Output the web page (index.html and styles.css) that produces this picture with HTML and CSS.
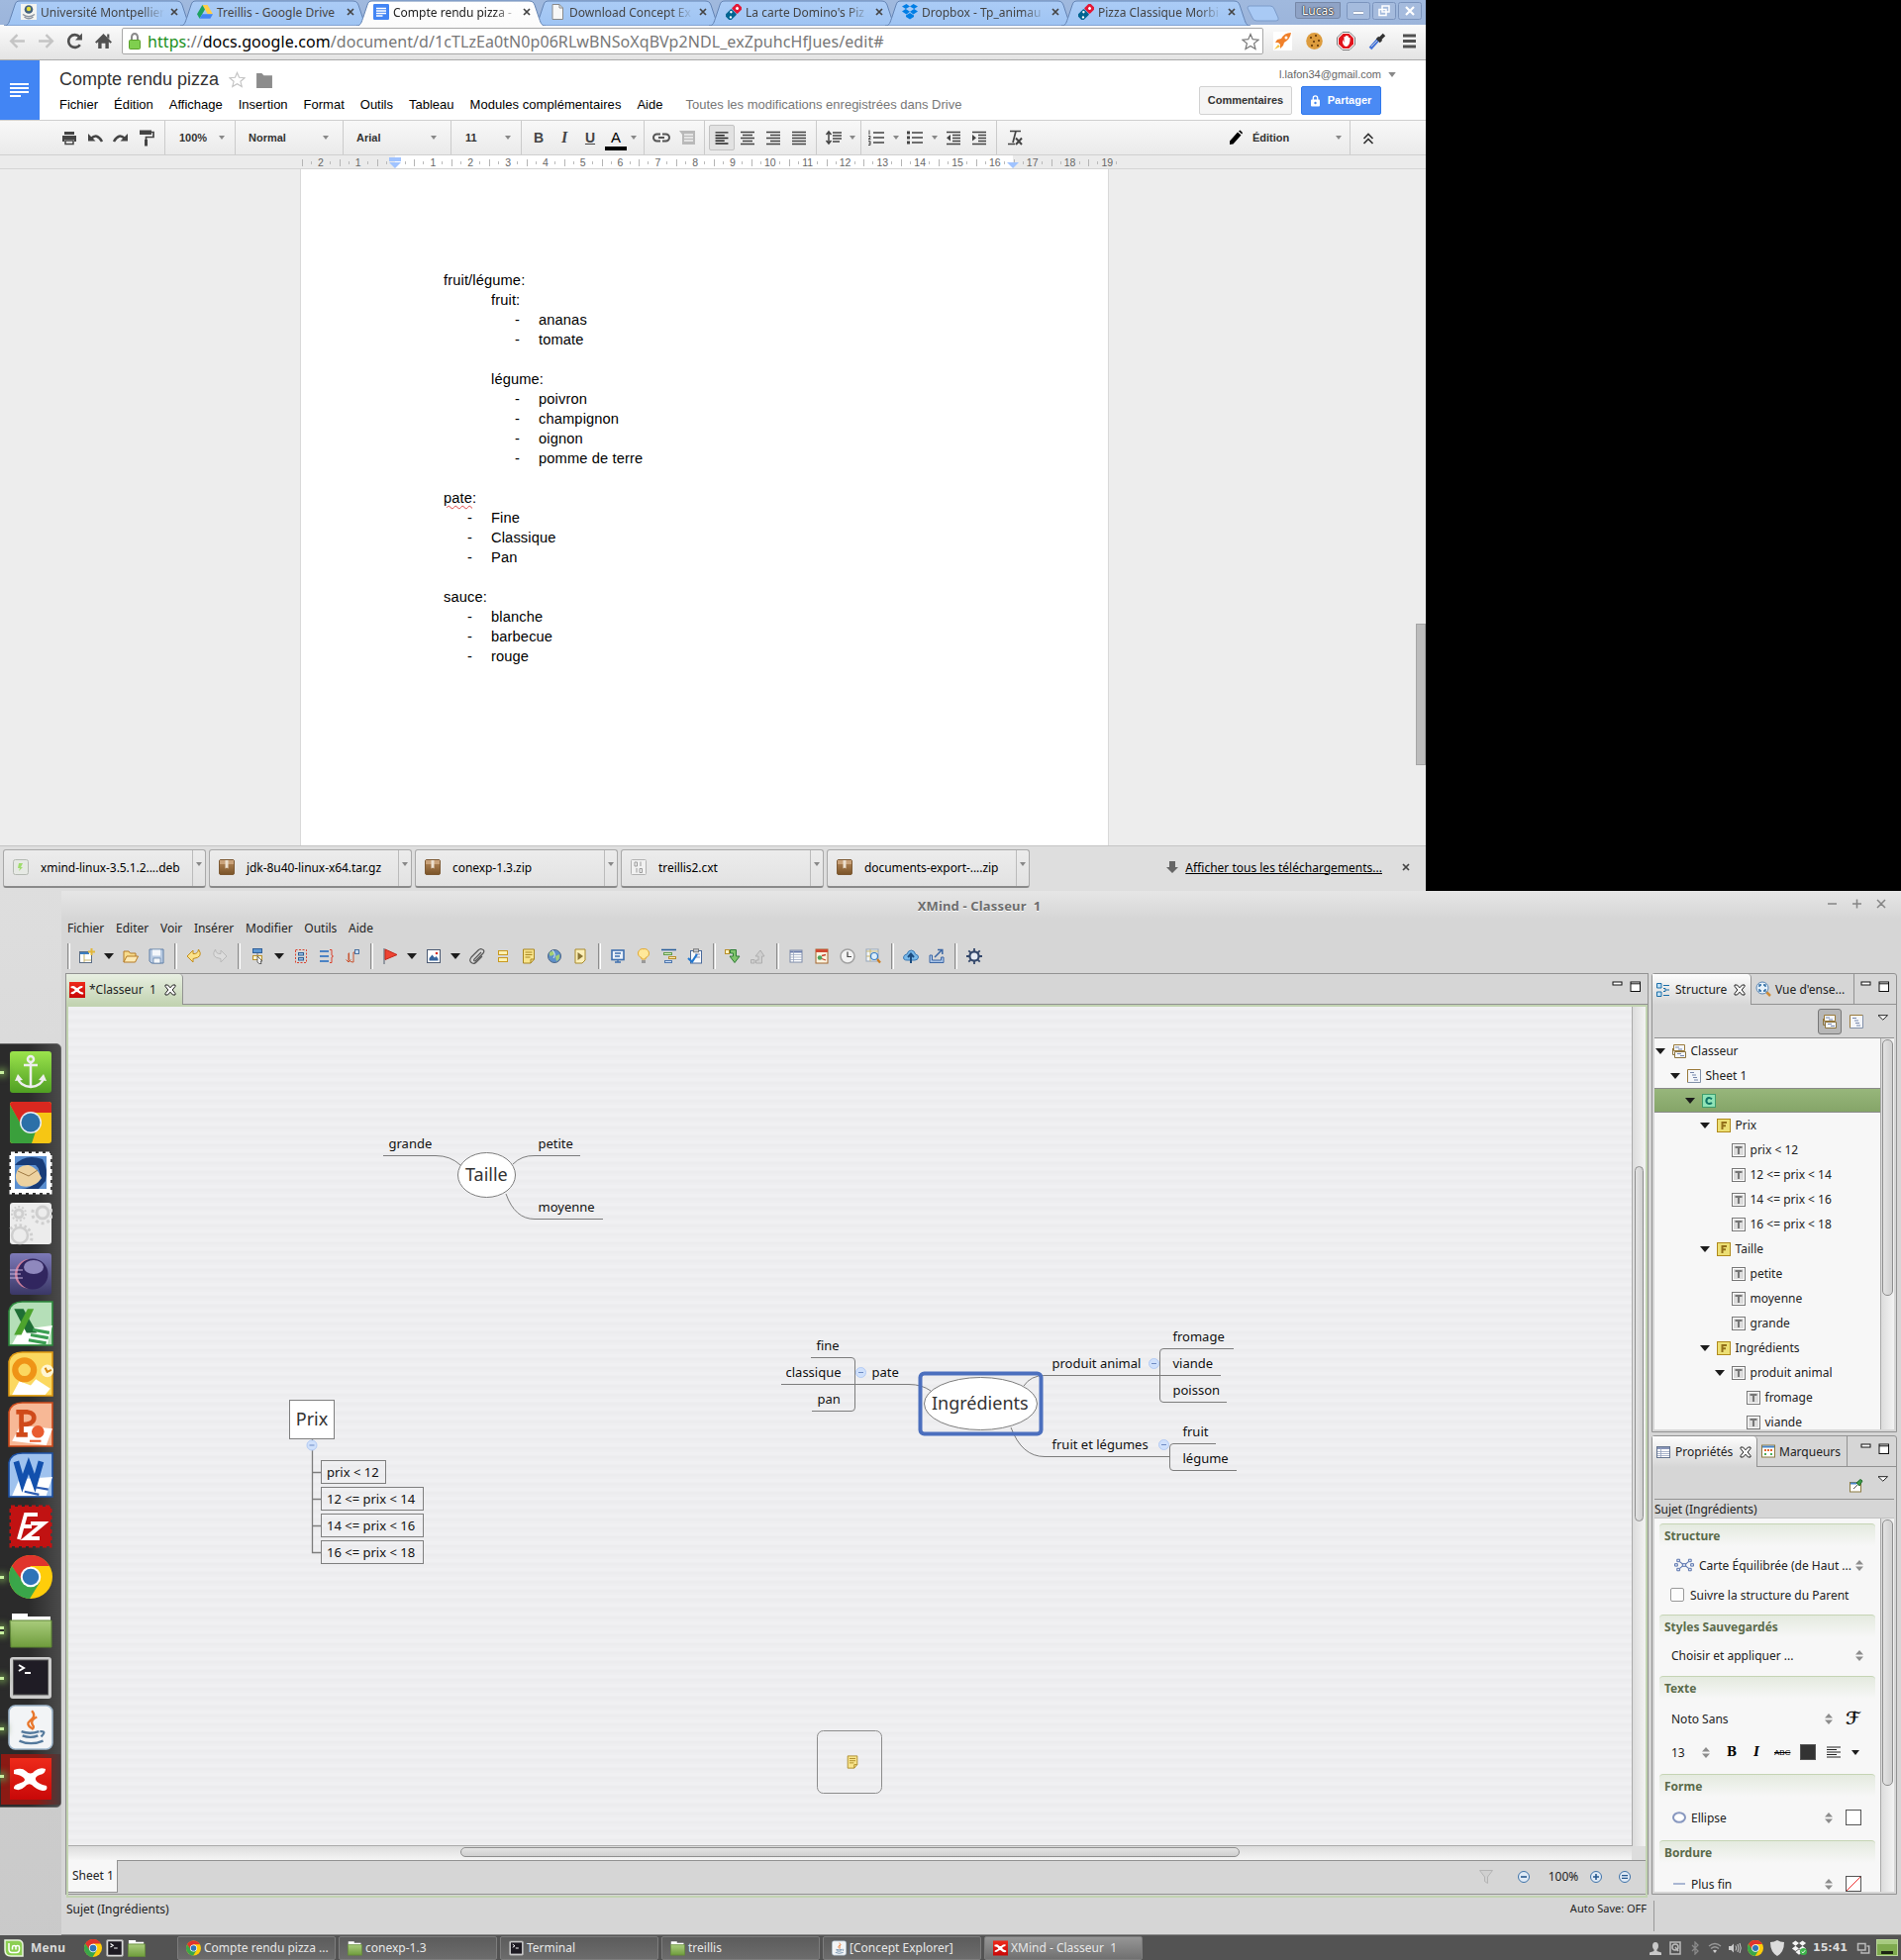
FILE: index.html
```html
<!DOCTYPE html>
<html lang="fr">
<head>
<meta charset="utf-8">
<title>Bureau</title>
<link rel="stylesheet" href="styles.css">
</head>
<body>
<svg class="defs" width="0" height="0">
<defs>
<linearGradient id="gTab" x1="0" y1="0" x2="0" y2="1"><stop offset="0" stop-color="#abccf6"/><stop offset="1" stop-color="#9fc4f3"/></linearGradient>
<linearGradient id="gTabOn" x1="0" y1="0" x2="0" y2="1"><stop offset="0" stop-color="#fff"/><stop offset="1" stop-color="#fbfbfb"/></linearGradient>
<linearGradient id="gGreen" x1="0" y1="0" x2="0" y2="1"><stop offset="0" stop-color="#a9cc7c"/><stop offset="1" stop-color="#6f9c3c"/></linearGradient>
<linearGradient id="gAnchor" x1="0" y1="0" x2="0" y2="1"><stop offset="0" stop-color="#9be34c"/><stop offset="1" stop-color="#4f9f22"/></linearGradient>
<linearGradient id="gEcl" x1="0" y1="0" x2="0" y2="1"><stop offset="0" stop-color="#7d7ab8"/><stop offset="1" stop-color="#3a3766"/></linearGradient>
<linearGradient id="gZip" x1="0" y1="0" x2="0" y2="1"><stop offset="0" stop-color="#b98a5c"/><stop offset="1" stop-color="#7a5428"/></linearGradient>
<linearGradient id="gRed" x1="0" y1="0" x2="0" y2="1"><stop offset="0" stop-color="#ee2a1a"/><stop offset="1" stop-color="#c80808"/></linearGradient>
<symbol id="tab" viewBox="0 0 192 26"><path d="M0 26C5 26 5 22 7 17L11 5C12 2 13 1 16 1H174C177 1 179 2 180 5L184 17C186 22 186 26 191 26Z" fill="url(#gTab)" stroke="#6484b4"/></symbol>
<symbol id="tabon" viewBox="0 0 192 26"><path d="M0 26C5 26 5 22 7 17L11 5C12 2 13 1 16 1H174C177 1 179 2 180 5L184 17C186 22 186 26 191 26" fill="url(#gTabOn)" stroke="#6484b4"/></symbol>
<symbol id="x" viewBox="0 0 8 8"><path d="M1 1L7 7M7 1L1 7" stroke="#444" stroke-width="1.7"/></symbol>
<symbol id="down" viewBox="0 0 6 4"><path d="M0 0H6L3 4Z" fill="#888"/></symbol>
<symbol id="caret" viewBox="0 0 10 6"><path d="M0 0H10L5 6Z" fill="#1c1c1c"/></symbol>
<symbol id="updn" viewBox="0 0 8 11"><path d="M0 4.5L4 0L8 4.5ZM0 6.5H8L4 11Z" fill="#8d8d8d"/></symbol>
<symbol id="domino" viewBox="0 0 16 16"><g transform="rotate(45 8 8)"><rect x="4" y="-1" width="8" height="8" rx="1" fill="#e31837"/><rect x="4" y="7.500" width="8" height="9.500" rx="1" fill="#006491"/><circle cx="8" cy="3" r="1.500" fill="#fff"/><circle cx="6.300" cy="10" r="1.200" fill="#fff"/><circle cx="9.700" cy="14" r="1.200" fill="#fff"/></g></symbol>
<symbol id="drive" viewBox="0 0 16 16"><path d="M5.4 1H10.6L16 10.3H10.8Z" fill="#ffcf48"/><path d="M5.4 1L0 10.3L2.6 14.8L8 5.5Z" fill="#1da261"/><path d="M5.3 10.3H16L13.4 14.8H2.6Z" fill="#4285f4"/></symbol>
<symbol id="dbox" viewBox="0 0 16 16"><path d="M4.5 0L8 2.5L3.8 5L0 2.6ZM11.5 0L8 2.5L12.2 5L16 2.6ZM3.8 5L8 7.8L4.5 10.5L0 7.6ZM12.2 5L8 7.8L11.5 10.5L16 7.6ZM4 11.5L8 9L12 11.5V13L8 15.6L4 13Z" fill="#007ee5"/></symbol>
<symbol id="doc" viewBox="0 0 16 16"><path d="M3 .5H10L13.5 4V15.5H3Z" fill="#f7f7f7" stroke="#8a8a8a"/><path d="M10 .5V4H13.5" fill="none" stroke="#8a8a8a"/></symbol>
<symbol id="gdoc" viewBox="0 0 16 16"><rect width="16" height="16" rx="1.2" fill="#4285f4"/><path d="M3 4.5H13M3 7H13M3 9.5H13M3 12H9.5" stroke="#fff" stroke-width="1.4"/></symbol>
<symbol id="um" viewBox="0 0 16 16"><rect width="16" height="16" fill="#f4f4f0"/><circle cx="8" cy="5.500" r="4.300" fill="#43617c"/><circle cx="8" cy="5" r="2.200" fill="#e3dc3a"/><path d="M2 10.500Q8 15 14 10.500M3.500 13Q8 16.500 12.500 13" stroke="#8a93a0" stroke-width="1.500" fill="none"/></symbol>
<symbol id="chrome" viewBox="0 0 24 24"><circle cx="12" cy="12" r="12" fill="#ffcd0a"/><path d="M1.6 6A12 12 0 0 1 22.4 6H12L7 15Z" fill="#e0342c"/><path d="M1.6 6A12 12 0 0 0 11.5 24L17 15L7.5 14.5Z" fill="#3aa64a"/><circle cx="12" cy="12" r="5.6" fill="#fff"/><circle cx="12" cy="12" r="4.5" fill="#2f74b8"/></symbol>
<symbol id="zip" viewBox="0 0 16 16"><rect x=".5" y=".5" width="15" height="15" rx="1.5" fill="url(#gZip)" stroke="#7d5a34"/><path d="M1 1H15V5H1Z" fill="#c9a27a"/><path d="M6.5 1H9.5V9.5L8 8.5L6.5 9.5Z" fill="#ece0cf"/></symbol>
<symbol id="folder" viewBox="0 0 20 20"><path d="M1 3V1H9V3H18V8H1Z" fill="#fff"/><path d="M.5 5.5H19.5V19.5H.5Z" fill="url(#gGreen)" stroke="#648a3a"/></symbol>
<symbol id="term" viewBox="0 0 20 20"><rect x=".5" y=".5" width="19" height="19" rx="2" fill="#d9d9d9" stroke="#999"/><rect x="2.5" y="2.5" width="15" height="15" fill="#1d1a22"/><path d="M5 5L8 7L5 9M9 10H13" stroke="#fff" stroke-width="1.3" fill="none"/></symbol>
<symbol id="java" viewBox="0 0 44 44"><rect x="1" y="1" width="42" height="42" rx="6" fill="#f2f4f6" stroke="#9fb7cc" stroke-width="1.5"/><path d="M23 6Q28 11 21 16Q17 19 23 23M28 12Q21 15 24 20Q26 22 23 24" stroke="#e8762b" stroke-width="2.2" fill="none"/><path d="M13 26Q21 29 30 26M14 30Q22 33 29 30M11 35Q22 40 34 35M31 26Q38 25 32 31" stroke="#54799c" stroke-width="2.2" fill="none"/></symbol>
<symbol id="xm" viewBox="0 0 42 42"><rect width="42" height="42" fill="url(#gRed)"/><path d="M4 12Q12 9 16 13Q21 18 25 13Q30 9 36 11Q36 16 30 17Q25 19 26 22Q28 26 37 28Q39 33 33 33Q27 32 22 27Q18 25 15 29Q10 34 4 31Q3 27 11 25Q17 23 14 20Q11 17 4 16Z" fill="#fff"/></symbol>
<symbol id="pclose" viewBox="0 0 12 12"><path d="M1 1H3.5L6 3.8L8.500 1H11V2.500L8.200 6L11 9.500V11H8.500L6 8.200L3.500 11H1V9.500L3.800 6L1 2.500Z" fill="#f6f6f6" stroke="#222"/></symbol>
<symbol id="pmin" viewBox="0 0 12 6"><rect x="1" y="1" width="9" height="3" fill="#fff" stroke="#111"/></symbol>
<symbol id="pmax" viewBox="0 0 12 12"><rect x="1" y="1" width="9.500" height="9.500" fill="#fff" stroke="#111"/><path d="M1 2.800H10.500" stroke="#111"/></symbol>
<symbol id="pmenu" viewBox="0 0 12 6"><path d="M1 .7H10.500L5.800 5.200Z" fill="#fff" stroke="#222"/></symbol>
<symbol id="iT" viewBox="0 0 14 14"><rect x=".5" y=".5" width="13" height="13" fill="#dcdcdc" stroke="#777"/><rect x="1.500" y="1.500" width="11" height="11" fill="none" stroke="#fff"/><path d="M3.500 4H10.500M7 4V11" stroke="#777" stroke-width="2"/></symbol>
<symbol id="iF" viewBox="0 0 14 14"><rect x=".5" y=".5" width="13" height="13" fill="#ecdf74" stroke="#b08a1c"/><path d="M5.500 11V4H10M5 7.300H9" stroke="#93701a" stroke-width="2" fill="none"/></symbol>
<symbol id="iC" viewBox="0 0 14 14"><rect x=".5" y=".5" width="13" height="13" fill="#8fe3b6" stroke="#3f9d6d"/><path d="M10 5.200Q7 2.800 5 5Q3.600 7.500 5.300 9.300Q7.500 11 10 9" stroke="#0f7466" stroke-width="2" fill="none"/></symbol>
<symbol id="iSheet" viewBox="0 0 14 14"><rect x=".5" y=".5" width="13" height="13" fill="#f4f6fa"/><path d="M.5 13.500V.5H13.500" fill="none" stroke="#9a7a3a"/><path d="M.5 13.500H13.500V.5" fill="none" stroke="#8190a8"/><path d="M3 3.500H7M5 6H9M6 8.500H10M7 11H11" stroke="#7787ab" stroke-width="1.200"/></symbol>
<symbol id="iBook" viewBox="0 0 14 14"><path d="M1.500 .5H12.500V6.500H1.500Z" fill="#f4f6fa" stroke="#9a7a3a"/><path d="M2.500 7.500H13.500V13.500H2.500Z" fill="#f4f6fa" stroke="#8c7440"/><path d="M.5 4V10.500H2" fill="none" stroke="#8c7440"/><path d="M3 3H7M6 5H10M5 9.500H9M8 11.500H12" stroke="#7787ab" stroke-width="1.200"/></symbol>
<symbol id="props" viewBox="0 0 14 12"><rect x=".5" y=".5" width="13" height="11" fill="#fff" stroke="#64748f"/><path d="M1 2H13" stroke="#8895b8" stroke-width="2"/><path d="M1 5.500H13M1 7.500H13M1 9.500H13M4.500 1V11" stroke="#93a0bd" stroke-width=".8"/></symbol>
<symbol id="fold" viewBox="0 0 12 12"><circle cx="6" cy="6" r="5" fill="#cfe0fb" stroke="#b3cbf4"/><path d="M3.500 6H8.500" stroke="#6f8cc4"/></symbol>
<symbol id="note" viewBox="0 0 16 16"><path d="M2.500 1H13.500V11L10 15H2.500Z" fill="#f8e48c" stroke="#a88621"/><path d="M4.500 4H11.500M4.500 6.500H11.500M4.500 9H9.500M10 15V11H13.500" stroke="#a88621" fill="none"/></symbol>
</defs>
</svg>

<main class="desktop">
<section class="offscreen"></section>

<section class="chrome">
 <div class="tabstrip">
  <div class="tab"><svg class="shape"><use href="#tab"/></svg><svg class="i16"><use href="#um"/></svg><span>Université Montpellier</span><svg class="i8"><use href="#x"/></svg></div>
  <div class="tab"><svg class="shape"><use href="#tab"/></svg><svg class="i16"><use href="#drive"/></svg><span class="full">Treillis - Google Drive</span><svg class="i8"><use href="#x"/></svg></div>
  <div class="tab on"><svg class="shape"><use href="#tabon"/></svg><svg class="i16"><use href="#gdoc"/></svg><span>Compte rendu pizza -</span><svg class="i8"><use href="#x"/></svg></div>
  <div class="tab"><svg class="shape"><use href="#tab"/></svg><svg class="i16"><use href="#doc"/></svg><span>Download Concept Ex</span><svg class="i8"><use href="#x"/></svg></div>
  <div class="tab"><svg class="shape"><use href="#tab"/></svg><svg class="i16"><use href="#domino"/></svg><span>La carte Domino's Piz</span><svg class="i8"><use href="#x"/></svg></div>
  <div class="tab"><svg class="shape"><use href="#tab"/></svg><svg class="i16"><use href="#dbox"/></svg><span>Dropbox - Tp_animau</span><svg class="i8"><use href="#x"/></svg></div>
  <div class="tab"><svg class="shape"><use href="#tab"/></svg><svg class="i16"><use href="#domino"/></svg><span>Pizza Classique Morbi</span><svg class="i8"><use href="#x"/></svg></div>
  <svg class="newtab" viewBox="0 0 34 18"><path d="M3 1H24Q27 1 28 4L32 13Q33 16 30 16H10Q7 16 6 13L1 3Q1 1 3 1Z" fill="#a9caf5" stroke="#7d9cca"/></svg>
  <div class="user">Lucas</div>
  <svg class="winbtn" viewBox="0 0 24 18"><rect x=".5" y=".5" width="23" height="17" rx="2" fill="#a5bbdd" stroke="#7b94bd"/><path d="M7 11H17" stroke="#6d84ab" stroke-width="4"/><path d="M7 11H17" stroke="#fff" stroke-width="2.500"/></svg>
  <svg class="winbtn" viewBox="0 0 24 18"><rect x=".5" y=".5" width="23" height="17" rx="2" fill="#a5bbdd" stroke="#7b94bd"/><path d="M10 4H17V10H10ZM7 7.500H14V13.500H7Z" fill="none" stroke="#fff" stroke-width="1.500"/></svg>
  <svg class="winbtn" viewBox="0 0 24 18"><rect x=".5" y=".5" width="23" height="17" rx="2" fill="#a5bbdd" stroke="#7b94bd"/><path d="M8 5L16 13M16 5L8 13" stroke="#fff" stroke-width="2.200"/></svg>
 </div>
 <div class="navbar">
  <svg class="nav" viewBox="0 0 16 16"><path d="M15 8H2M8 2L2 8L8 14" stroke="#c4c4c4" stroke-width="2.200" fill="none"/></svg>
  <svg class="nav" viewBox="0 0 16 16"><path d="M1 8H14M8 2L14 8L8 14" stroke="#c4c4c4" stroke-width="2.200" fill="none"/></svg>
  <svg class="nav" viewBox="0 0 16 16"><path d="M13 11.500A6 6 0 1 1 12.500 4" stroke="#505050" stroke-width="2.500" fill="none"/><path d="M15 .5V7H8.500Z" fill="#505050"/></svg>
  <svg class="nav" viewBox="0 0 16 16"><path d="M8 1L16 9L14.500 10L13 8.700V15H9.800V10H6.200V15H3V8.700L1.500 10L0 9Z" fill="#505050"/><path d="M11.500 1.500H13.500V6L11.500 4Z" fill="#505050"/></svg>
  <div class="omni">
   <svg class="lock" viewBox="0 0 12 17"><path d="M3 8V4.500A3 3.500 0 0 1 9 4.500V8" fill="none" stroke="#8b8b8b" stroke-width="2"/><rect x=".5" y="7.500" width="11" height="9" rx="1" fill="#7fcf4f" stroke="#5ba02d"/></svg>
   <span class="url"><i>https</i>://<b>docs.google.com</b>/document/d/1cTLzEa0tN0p06RLwBNSoXqBVp2NDL_exZpuhcHfJues/edit#</span>
   <svg class="star" viewBox="0 0 18 18"><path d="M9 1.500L11.200 6.700L17 7.200L12.600 10.900L14 16.500L9 13.400L4 16.500L5.400 10.900L1 7.200L6.800 6.700Z" fill="#fff" stroke="#777" stroke-width="1.200"/></svg>
  </div>
  <svg class="ext" viewBox="0 0 19 19"><rect width="19" height="19" fill="#fff"/><path d="M18 1Q11 1 8 7L4 8L2 11H5L7 13V17L10 14L11 11Q17 8 18 1Z" fill="#f0802a"/><path d="M5 13L1 18L7 15Z" fill="#f6c13c"/><circle cx="13" cy="6" r="1.500" fill="#fff"/></svg>
  <svg class="ext" viewBox="0 0 19 19"><ellipse cx="9.500" cy="9.500" rx="8.300" ry="8.500" fill="#dd9c3e"/><path d="M5 6H7M10 4H12M8 10H10M13 9H15M6 14H8M12 14H14" stroke="#7a4a12" stroke-width="2"/></svg>
  <svg class="ext" viewBox="0 0 19 19"><path d="M6 .5H13L18.500 6V13L13 18.500H6L.5 13V6Z" fill="#fff" stroke="#777"/><path d="M6.500 2H12.500L17 6.500V12.500L12.500 17H6.500L2 12.500V6.500Z" fill="#e1131b"/><path d="M6 8V11Q7 15 10 15Q13 14 13.500 9V6H12V9V4.500H10.500V9V4H9V9V5H7.500V11Z" fill="#fff"/></svg>
  <svg class="ext" viewBox="0 0 19 19"><path d="M2 17L10 8" stroke="#4272d8" stroke-width="3.500"/><path d="M3 15L10 8" stroke="#c9d2e0" stroke-width="1"/><path d="M9 6L13 10M11 8L16 3" stroke="#333" stroke-width="3.500"/></svg>
  <svg class="ext" viewBox="0 0 19 19"><path d="M3 4H16M3 9.500H16M3 15H16" stroke="#505050" stroke-width="3"/></svg>
 </div>

 <header class="dochead">
  <div class="doclogo"><svg viewBox="0 0 20 16"><path d="M0 2H19M0 6H19M0 10H19M0 14H11" stroke="#fff" stroke-width="2"/></svg></div>
  <div class="docmain">
   <div class="titleline"><h1>Compte rendu pizza</h1>
    <svg class="tstar" viewBox="0 0 18 18"><path d="M9 1.500L11.200 6.700L17 7.200L12.600 10.900L14 16.500L9 13.400L4 16.500L5.400 10.900L1 7.200L6.800 6.700Z" fill="#fff" stroke="#c4c4c4" stroke-width="1.200"/></svg>
    <svg class="tfold" viewBox="0 0 17 14"><path d="M1 0H6L8 2H16V14H1Z" fill="#8c8c8c"/></svg></div>
   <nav class="docmenu"><span>Fichier</span><span>Édition</span><span>Affichage</span><span>Insertion</span><span>Format</span><span>Outils</span><span>Tableau</span><span>Modules complémentaires</span><span>Aide</span><em>Toutes les modifications enregistrées dans Drive</em></nav>
  </div>
  <div class="docright">
   <div class="mail">l.lafon34@gmail.com<svg class="dn8"><use href="#down"/></svg></div>
   <div class="btns"><span class="btn">Commentaires</span><span class="btn share"><svg viewBox="0 0 9 12"><path d="M2.300 5V3A2.200 2.200 0 0 1 6.700 3V5" fill="none" stroke="#fff" stroke-width="1.300"/><rect y="4.500" width="9" height="7" rx="1" fill="#fff"/><circle cx="4.500" cy="8" r="1.200" fill="#4787ed"/></svg>Partager</span></div>
  </div>
 </header>

 <div class="doctools">
  <div class="g g1">
   <svg class="t" viewBox="0 0 18 18"><path d="M4 3H14V6H4ZM2 7H16V13H14V11H4V13H2Z" fill="#444"/><path d="M5 12H13V15.500H5Z" fill="none" stroke="#444" stroke-width="1.500"/></svg>
   <svg class="t" viewBox="0 0 18 18"><path d="M5 10Q11 4 16 13" stroke="#444" stroke-width="2.500" fill="none"/><path d="M2 5V12.500H9.500Z" fill="#444"/></svg>
   <svg class="t" viewBox="0 0 18 18"><path d="M13 10Q7 4 2 13" stroke="#444" stroke-width="2.500" fill="none"/><path d="M16 5V12.500H8.500Z" fill="#444"/></svg>
   <svg class="t" viewBox="0 0 18 18"><path d="M2 1.500H14V6H2Z" fill="#444"/><path d="M13 3.500H16V8.500H8.500V17" stroke="#444" stroke-width="1.700" fill="none"/><path d="M7 11H10V17.500H7Z" fill="#444"/></svg>
  </div>
  <div class="g g2"><b>100%</b><svg class="dn6"><use href="#down"/></svg></div>
  <div class="g g3"><b>Normal</b><svg class="dn6"><use href="#down"/></svg></div>
  <div class="g g3"><b>Arial</b><svg class="dn6"><use href="#down"/></svg></div>
  <div class="g g5"><b>11</b><svg class="dn6"><use href="#down"/></svg></div>
  <div class="g g6"><b class="fmt">B</b><b class="fmt it">I</b><b class="fmt un">U</b><span class="fmt col">A</span><svg class="dn6"><use href="#down"/></svg></div>
  <div class="g g7">
   <svg class="t" viewBox="0 0 18 18"><path d="M8 5.500H4.500A3.500 3.500 0 0 0 4.500 12.500H8M10 5.500H13.500A3.500 3.500 0 0 1 13.500 12.500H10M6 9H12" stroke="#555" stroke-width="2" fill="none"/></svg>
   <svg class="t" viewBox="0 0 18 18"><path d="M1 2H17V16H4V6Z" fill="#b9b9b9"/><path d="M6 6H15M6 9H15M6 12H15" stroke="#f2f2f2" stroke-width="1.300"/></svg></div>
  <div class="g g8">
   <svg class="t on" viewBox="0 0 26 26"><path d="M6 7.500H20M6 10.500H16M6 13.500H20M6 16.500H16M6 19.500H20" stroke="#222" stroke-width="1.500"/></svg>
   <svg class="t" viewBox="0 0 18 18"><path d="M2 3.500H16M4 6.500H14M2 9.500H16M4 12.500H14M2 15.500H16" stroke="#444" stroke-width="1.500"/></svg>
   <svg class="t" viewBox="0 0 18 18"><path d="M2 3.500H16M6 6.500H16M2 9.500H16M6 12.500H16M2 15.500H16" stroke="#444" stroke-width="1.500"/></svg>
   <svg class="t" viewBox="0 0 18 18"><path d="M2 3.500H16M2 6.500H16M2 9.500H16M2 12.500H16M2 15.500H16" stroke="#444" stroke-width="1.500"/></svg></div>
  <div class="g g9"><svg class="t" viewBox="0 0 18 18"><path d="M4 3V15M1.500 6L4 3L6.500 6M1.500 12L4 15L6.500 12" stroke="#444" stroke-width="1.500" fill="none"/><path d="M8 4H17M8 7H17M8 10H17M8 13H15" stroke="#444" stroke-width="1.500"/></svg><svg class="dn6"><use href="#down"/></svg></div>
  <div class="g g10">
   <svg class="t" viewBox="0 0 18 18"><path d="M6 4H17M6 9H17M6 14H17" stroke="#444" stroke-width="1.500"/><path d="M2 1.500V6M1 7.500H3V9L1 10.500H3.500M1 12.500H3V16.500H1M1.500 14.500H3" stroke="#444" fill="none"/></svg><svg class="dn6"><use href="#down"/></svg>
   <svg class="t" viewBox="0 0 18 18"><path d="M6 4H17M6 9H17M6 14H17" stroke="#444" stroke-width="1.500"/><path d="M1 2.500H4V5.500H1ZM1 7.500H4V10.500H1ZM1 12.500H4V15.500H1Z" fill="#444"/></svg><svg class="dn6"><use href="#down"/></svg>
   <svg class="t in" viewBox="0 0 18 18"><path d="M2 3.500H16M8 6.500H16M8 9.500H16M8 12.500H16M2 15.500H16" stroke="#444" stroke-width="1.500"/><path d="M6 6V12.500L2 9.200Z" fill="#444"/></svg>
   <svg class="t in" viewBox="0 0 18 18"><path d="M2 3.500H16M8 6.500H16M8 9.500H16M8 12.500H16M2 15.500H16" stroke="#444" stroke-width="1.500"/><path d="M2 6V12.500L6 9.200Z" fill="#444"/></svg></div>
  <div class="g g11"><svg class="t" viewBox="0 0 18 18"><path d="M4 2.500H15M10 2.500L7 14M2 15.500H9" stroke="#444" stroke-width="1.700"/><path d="M10 9.500L16 16M16 9.500L10 16" stroke="#444" stroke-width="2"/></svg></div>
  <div class="g g12"><svg class="t" viewBox="0 0 18 18"><path d="M3 16V12.500L11 3.500L14.500 6.500L6.500 15.500Z M12 2.500L13.500 1.500L16 4L15.300 5.500Z" fill="#000"/></svg><b>Édition</b><svg class="dn6"><use href="#down"/></svg></div>
  <div class="g13"><svg viewBox="0 0 12 12"><path d="M1.500 6L6 1.500L10.500 6M1.500 11L6 6.500L10.500 11" stroke="#333" stroke-width="1.700" fill="none"/></svg></div>
 </div>

 <div class="ruler"><div class="scale"><span>2</span><span>1</span><span></span><span>1</span><span>2</span><span>3</span><span>4</span><span>5</span><span>6</span><span>7</span><span>8</span><span>9</span><span>10</span><span>11</span><span>12</span><span>13</span><span>14</span><span>15</span><span>16</span><span>17</span><span>18</span><span>19</span></div>
  <svg class="mark m1" viewBox="0 0 12 12"><path d="M0 1H12V5H0ZM0 6H12L6 12Z" fill="#a0c3ff"/></svg><svg class="mark m2" viewBox="0 0 12 12"><path d="M0 6H12L6 12Z" fill="#a0c3ff"/></svg></div>

 <div class="docarea">
  <article class="page">
   <p>fruit/légume:</p>
   <p class="l1">fruit:</p>
   <ul class="l2"><li>ananas</li><li>tomate</li></ul>
   <p class="l1 gap">légume:</p>
   <ul class="l2"><li>poivron</li><li>champignon</li><li>oignon</li><li>pomme de terre</li></ul>
   <p class="gap"><span class="typo">pate</span>:</p>
   <ul class="l1"><li>Fine</li><li>Classique</li><li>Pan</li></ul>
   <p class="gap">sauce:</p>
   <ul class="l1"><li>blanche</li><li>barbecue</li><li>rouge</li></ul>
  </article>
  <div class="docscroll"><i></i></div>
 </div>

 <footer class="downloads">
  <div class="dl"><svg viewBox="0 0 16 16"><rect x=".5" y=".5" width="15" height="15" rx="2" fill="#e6e9e4" stroke="#b4b9b2"/><path d="M6 4H10L8 8H10L6 12L7 9H5Z" fill="#9fdc6c"/></svg><span>xmind-linux-3.5.1.2....deb</span><i><svg class="dn6"><use href="#down"/></svg></i></div>
  <div class="dl"><svg><use href="#zip"/></svg><span>jdk-8u40-linux-x64.tar.gz</span><i><svg class="dn6"><use href="#down"/></svg></i></div>
  <div class="dl"><svg><use href="#zip"/></svg><span>conexp-1.3.zip</span><i><svg class="dn6"><use href="#down"/></svg></i></div>
  <div class="dl"><svg viewBox="0 0 16 16"><rect x=".5" y=".5" width="15" height="15" rx="1" fill="#f1f1f1" stroke="#b2b2b2"/><path d="M4 3H6.500V7H4ZM10 2.500V7M6 9V13.500M9 9.500H11.500V13.500H9Z" fill="none" stroke="#9b9b9b"/></svg><span>treillis2.cxt</span><i><svg class="dn6"><use href="#down"/></svg></i></div>
  <div class="dl"><svg><use href="#zip"/></svg><span>documents-export-....zip</span><i><svg class="dn6"><use href="#down"/></svg></i></div>
  <div class="alldl"><svg viewBox="0 0 12 12"><path d="M3 0H9V6H12L6 12L0 6H3Z" fill="#666"/></svg><u>Afficher tous les téléchargements...</u><svg class="i8"><use href="#x"/></svg></div>
 </footer>
</section>

<section class="xmind">
 <div class="wtitle"><span>XMind - Classeur&nbsp; 1</span><svg class="wctl" viewBox="0 0 60 12"><path d="M1 6H10M26 6H35M30.500 1.500V10.500M51 2L59 10M59 2L51 10" stroke="#858585" stroke-width="1.500"/></svg></div>
 <nav class="wmenu"><span>Fichier</span><span>Editer</span><span>Voir</span><span>Insérer</span><span>Modifier</span><span>Outils</span><span>Aide</span></nav>
 <div class="wtools">
  <hr><svg class="c" viewBox="0 0 16 16"><rect x=".5" y="3.500" width="12" height="11" fill="#fff" stroke="#5b6d84"/><path d="M1 5H10" stroke="#3f7ec0" stroke-width="2"/><path d="M5 6V14M5 12H12" stroke="#c9b36a"/><path d="M12.500 0V7M9 3.500H16" stroke="#e2b73a" stroke-width="2"/></svg><svg class="k"><use href="#caret"/></svg>
  <svg class="c" viewBox="0 0 16 16"><path d="M1 14V3H6L7.500 5H13V8" fill="#f7dc8e" stroke="#b57a24"/><path d="M1 14L4 8H15.500L12.500 14Z" fill="#fce9b4" stroke="#b57a24"/></svg>
  <svg class="c" viewBox="0 0 16 16"><path d="M1 1H15V15H3L1 13Z" fill="#b9cbe2" stroke="#5f7ea6"/><rect x="4" y="1.500" width="8" height="6" fill="#f4f7fb"/><rect x="5" y="10" width="7" height="5" fill="#f4f7fb" stroke="#5f7ea6" stroke-width=".7"/></svg>
  <hr><svg class="c" viewBox="0 0 16 16"><path d="M1 8L7 2V5.500Q12 6 12.500 1Q18 9 7 10.500V14Z" fill="#fbe28a" stroke="#c28d1c"/></svg>
  <svg class="c" viewBox="0 0 16 16"><path d="M15 8L9 2V5.500Q4 6 3.500 1Q-2 9 9 10.500V14Z" fill="#dcdcdc" stroke="#b9b9b9"/></svg>
  <hr><svg class="c" viewBox="0 0 16 16"><rect x="3.500" y=".5" width="9" height="4" fill="#5d97d3" stroke="#2f5f99"/><path d="M8 5V8" stroke="#777"/><rect x="3.500" y="7.500" width="9" height="4" fill="#faf3cf" stroke="#b9912e"/><path d="M8 8L13 13L11 13L12 15.500L10 15.500L8 14Z" fill="#fff" stroke="#444" stroke-width=".8"/></svg><svg class="k"><use href="#caret"/></svg>
  <svg class="c" viewBox="0 0 16 16"><rect x="2.500" y="1.500" width="11" height="13" fill="none" stroke="#d9432f" stroke-dasharray="2 1.500"/><rect x="5.500" y="4.500" width="5" height="2.500" fill="#9cc4ea" stroke="#2d5f96"/><rect x="5.500" y="9.500" width="5" height="2.500" fill="#9cc4ea" stroke="#2d5f96"/></svg>
  <svg class="c" viewBox="0 0 16 16"><path d="M1 3H10M1 8H10M1 13H10" stroke="#4c83c4" stroke-width="2"/><path d="M11 1.500H13V7L14.500 8L13 9V14.500H11" fill="none" stroke="#d9432f"/></svg>
  <svg class="c" viewBox="0 0 16 16"><path d="M4 5V14M1.500 11.500L4 14L6.500 11.500M4.500 4.500V10Q4.500 14 9 14V4H11" stroke="#c8532f" fill="none"/><rect x="10.500" y="1.500" width="4" height="4" fill="#c7dcf4" stroke="#48709f"/></svg>
  <hr><svg class="c" viewBox="0 0 16 16"><path d="M2 0V16" stroke="#7d8590" stroke-width="1.500"/><path d="M3 1L15 6.500L3 11.500Z" fill="#ee4433" stroke="#c3261a"/></svg><svg class="k"><use href="#caret"/></svg>
  <svg class="c" viewBox="0 0 16 16"><rect x="1.500" y="1.500" width="13" height="13" fill="#fff" stroke="#4b5a73"/><path d="M3.500 12.500V10L6.500 6.500L9 9.500L10.500 8L12.500 10.500V12.500Z" fill="#37659e"/><circle cx="11" cy="5" r="1.300" fill="#d83227"/></svg><svg class="k"><use href="#caret"/></svg>
  <svg class="c" viewBox="0 0 16 16"><path d="M12 4L5 11Q4 13 6 13L14 5Q16 2 13 1Q11 0 9 2L2 9Q-1 13 3 15Q5 16 7 14L13 8" fill="none" stroke="#555" stroke-width="1.200"/></svg>
  <svg class="c" viewBox="0 0 16 16"><rect x="3.500" y="2.500" width="9" height="4" fill="#fdf1b0" stroke="#c8981f"/><rect x="3.500" y="9.500" width="9" height="4" fill="#fdf1b0" stroke="#c8981f"/></svg>
  <svg class="c"><use href="#note"/></svg>
  <svg class="c" viewBox="0 0 16 16"><circle cx="8" cy="8" r="6.500" fill="#5e8fc9" stroke="#4d6785"/><path d="M3 4Q8 1 8 6Q4 9 3 7ZM9 8L13 6Q14 11 10 13Z" fill="#a4cf74"/><path d="M6 2Q10 6 7 10" stroke="#d8e8f6" fill="none"/></svg>
  <svg class="c" viewBox="0 0 16 16"><path d="M3 1H13V12L10 15H3Z" fill="#fbefb8" stroke="#a98a2c"/><path d="M5.500 4L11 8L5.500 12Z" fill="#8a7434"/></svg>
  <hr><svg class="c" viewBox="0 0 16 16"><rect x="2" y="2" width="12" height="9.500" fill="#eaf1fa" stroke="#3e6fae" stroke-width="1.600"/><path d="M5 5H11M5 8H10M5 14H11M8 12V14" stroke="#3e6fae" stroke-width="1.300"/></svg>
  <svg class="c" viewBox="0 0 16 16"><path d="M8 .7A4.500 4.500 0 0 1 10 9.500V11H6V9.500A4.500 4.500 0 0 1 8 .7Z" fill="#ffe89a" stroke="#e0a52a"/><path d="M6 12H10V15H6Z" fill="#9a9a9a"/></svg>
  <svg class="c" viewBox="0 0 16 16"><path d="M0 1.500H15" stroke="#2b5f9b" stroke-width="1.500"/><rect x="2.500" y="4.500" width="8" height="2" fill="#d8ecc0" stroke="#609a4a"/><rect x="7.500" y="8.500" width="7" height="2" fill="#fdeeb0" stroke="#b88e28"/><rect x="3.500" y="12.500" width="7" height="2" fill="#cfe0f6" stroke="#4e77ae"/></svg>
  <svg class="c" viewBox="0 0 16 16"><rect x="3.500" y="2.500" width="11" height="12.500" fill="#f7f9fc" stroke="#4a6a9b"/><rect x="6.500" y=".8" width="5" height="3" fill="#c9ccd2" stroke="#777"/><path d="M8 6H13M9 9H13" stroke="#88a"/><path d="M1 10L5 13.500L10 6" stroke="#2277cf" stroke-width="2.200" fill="none"/></svg>
  <hr><svg class="c" viewBox="0 0 16 16"><rect x=".5" y="1.500" width="4" height="4" fill="#fff3c4" stroke="#b88e28"/><path d="M5.500 1.500H11.500V8H15L10 14.500L5 8H8.500V5H5.500Z" fill="#7fc46c" stroke="#2f7d35"/></svg>
  <svg class="c" viewBox="0 0 16 16"><path d="M.5 11.500H4V15H.5ZM5.500 15H11.500V8H14L10 2L5 8H8V12H5.500Z" fill="#cfcfcf" stroke="#aeaeae"/></svg>
  <hr><svg class="c" viewBox="0 0 16 16"><rect x="2" y="2" width="12" height="12" fill="#fff" stroke="#7d8aa8"/><path d="M2 3.500H14" stroke="#6f80ad" stroke-width="2"/><path d="M2 6.500H14M2 9H14M2 11.500H14M5.500 3V14" stroke="#9aa7c0" stroke-width=".8"/></svg>
  <svg class="c" viewBox="0 0 16 16"><rect x="2" y="1" width="12" height="14" fill="#fbf3e0" stroke="#a3672f"/><path d="M2 2.500H14" stroke="#d04b32" stroke-width="3"/><circle cx="6" cy="9.500" r="2.300" fill="#4fa35a"/><path d="M8 7.500L12 6.500M8 10.500L12 12" stroke="#c8442c" stroke-width="1.300"/></svg>
  <svg class="c" viewBox="0 0 16 16"><circle cx="8" cy="8" r="7" fill="#f3f3f3" stroke="#a1a1a1" stroke-width="1.500"/><path d="M8 3.500V8.500H12" stroke="#444" fill="none" stroke-width="1.200"/></svg>
  <svg class="c" viewBox="0 0 16 16"><rect x="1" y="1" width="12" height="12" fill="#f3f6fa" stroke="#95a5b8"/><path d="M1 3H13M5 1V13M1 8H7" stroke="#c6b46c"/><circle cx="9" cy="8" r="3.500" fill="#dceefb" stroke="#3c7fc4" stroke-width="1.200"/><path d="M12 11L15 14.500" stroke="#ca7c20" stroke-width="2.200"/></svg>
  <hr><svg class="c" viewBox="0 0 16 16"><path d="M4 12Q0 12 .7 8.500Q1.500 6 4 6Q5 2 8.500 2Q12 2.500 12.500 6Q15.500 6.500 15.500 9Q15 12 12 12Z" fill="#78b9ea" stroke="#3878b4"/><path d="M8 15V6M5 9L8 5.500L11 9" stroke="#1c4d80" stroke-width="2" fill="none"/></svg>
  <svg class="c" viewBox="0 0 16 16"><path d="M1 7H3.500V12H12.500V9H15V14.500H1Z" fill="#a9c3e6" stroke="#3c67a4"/><path d="M6 9L13 2M9 1.500H13.800V6" stroke="#3c67a4" stroke-width="1.500" fill="none"/></svg>
  <hr><svg class="c" viewBox="0 0 16 16"><circle cx="8" cy="8" r="4.600" fill="#e5ebf3" stroke="#34486b" stroke-width="2.200"/><path d="M8 0V3M8 13V16M0 8H3M13 8H16M2.300 2.300L4.400 4.400M11.600 11.600L13.700 13.700M13.700 2.300L11.600 4.400M4.400 11.600L2.300 13.700" stroke="#34486b" stroke-width="1.800"/></svg>
 </div>

 <div class="bench">
  <section class="editor">
   <div class="ptabs"><div class="ptab etab"><svg class="i15"><use href="#xm"/></svg><span>*Classeur&nbsp; 1</span><svg class="i12"><use href="#pclose"/></svg></div><div class="pctl"><svg class="mn"><use href="#pmin"/></svg><svg class="mx"><use href="#pmax"/></svg></div></div>
   <div class="ebody">
    <div class="canvas">
     <svg class="links" width="1579" height="847" viewBox="69 1017 1579 847">
      <g fill="none" stroke="#7d7d7d">
       <path d="M387 1167.500H440Q455 1167.500 465 1177"/><path d="M586 1167.500H540Q527 1167 518 1176"/><path d="M511 1206Q520 1231.500 540 1231.500H609"/>
       <ellipse cx="491.500" cy="1187" rx="29" ry="22.500" fill="#fff"/>
       <path d="M315.500 1453V1568.500H324M315.500 1487.500H324M315.500 1514.500H324M315.500 1541.500H324" stroke-width="1.300"/>
       <path d="M819 1371.500H860Q863.500 1371.500 863.500 1375V1422Q863.500 1425.500 860 1425.500H820"/>
       <path d="M789 1398.500H918Q931 1398.500 940 1405"/>
       <path d="M1034 1400Q1041 1389.500 1055 1389.500H1233M1246 1362.500H1175Q1171.500 1362.500 1171.500 1366V1413Q1171.500 1416.500 1175 1416.500H1239"/>
       <path d="M1021 1442Q1032 1471.500 1055 1471.500H1181.500M1228 1458.500H1185Q1181.500 1458.500 1181.500 1462V1482Q1181.500 1485.500 1185 1485.500H1249"/>
       <ellipse cx="990.500" cy="1418" rx="57" ry="26.500" fill="#fff"/>
      </g>
      <rect x="929.500" y="1387.500" width="122" height="61" rx="4" fill="none" stroke="#4b6fbe" stroke-width="4"/>
      <rect x="825.500" y="1748.500" width="65" height="63" rx="6" fill="none" stroke="#8c8c8c"/>
      <use href="#fold" x="309" y="1454" width="12" height="12"/><use href="#fold" x="863.500" y="1380.500" width="12" height="12"/><use href="#fold" x="1159.500" y="1371.500" width="12" height="12"/><use href="#fold" x="1169.500" y="1453.500" width="12" height="12"/>
      <use href="#note" x="854" y="1773" width="14" height="14"/>
     </svg>
     <span class="n t1">grande</span><span class="n t2">petite</span><span class="n t3">moyenne</span><span class="n big t4">Taille</span>
     <span class="n bx big p0">Prix</span><span class="n bx p1">prix &lt; 12</span><span class="n bx p2">12 &lt;= prix &lt; 14</span><span class="n bx p3">14 &lt;= prix &lt; 16</span><span class="n bx p4">16 &lt;= prix &lt; 18</span>
     <span class="n a1">fine</span><span class="n a2">classique</span><span class="n a3">pan</span><span class="n a4">pate</span><span class="n big a5">Ingrédients</span>
     <span class="n b1">produit animal</span><span class="n b2">fromage</span><span class="n b3">viande</span><span class="n b4">poisson</span>
     <span class="n c1">fruit et légumes</span><span class="n c2">fruit</span><span class="n c3">légume</span>
    </div>
    <div class="vbar"><i></i></div>
    <div class="hbar"><i></i></div>
    <div class="corner"></div>
   </div>
   <div class="sheets"><span class="sheet">Sheet 1</span>
    <svg class="z1" viewBox="0 0 14 14"><path d="M.5 .5H13.500L8.500 7V13.500L5.500 11.500V7Z" fill="#d0d0d0" stroke="#b4b4b4"/></svg>
    <svg class="z2" viewBox="0 0 14 14"><circle cx="7" cy="7" r="5.500" fill="#dfeaf6" stroke="#3f72a8"/><path d="M4 7H10" stroke="#27598f" stroke-width="1.600"/></svg>
    <span class="pct">100%</span>
    <svg class="z3" viewBox="0 0 14 14"><circle cx="7" cy="7" r="5.500" fill="#dfeaf6" stroke="#3f72a8"/><path d="M4 7H10M7 4V10" stroke="#27598f" stroke-width="1.600"/></svg>
    <svg class="z4" viewBox="0 0 14 14"><circle cx="7" cy="7" r="5.500" fill="#dfeaf6" stroke="#3f72a8"/><path d="M4 5.700H10M4 8.300H10" stroke="#27598f" stroke-width="1.300"/></svg>
   </div>
  </section>

  <aside class="side">
   <section class="view v1">
    <div class="ptabs"><div class="ptab s1"><svg class="i14" viewBox="0 0 14 14"><path d="M.5 .5H5V5H.5ZM.5 9H5V13.500H.5Z" fill="#bfe0f5" stroke="#1d6fa8"/><path d="M7 2.500H13M9 7H13M7 12.500H13M7 5.500H9V8.500H7" stroke="#1d6fa8" fill="none"/></svg><span>Structure</span><svg class="i12"><use href="#pclose"/></svg></div>
     <div class="ptab off s2"><svg class="i16" viewBox="0 0 16 16"><path d="M10.500 10.500L15 15" stroke="#cf8b36" stroke-width="2.500"/><circle cx="7" cy="7" r="6" fill="#e6f1fa" stroke="#5b87b5"/><path d="M4 6V4H6M8 4H10V6M10 8V10H8M6 10H4V8" stroke="#23639d" fill="none" stroke-width="1.300"/></svg><span>Vue d'ense...</span></div><div class="pctl"><svg class="mn"><use href="#pmin"/></svg><svg class="mx"><use href="#pmax"/></svg></div></div>
    <div class="vtool"><span class="pressed"><svg class="i14"><use href="#iBook"/></svg></span><svg class="i14 tb2"><use href="#iSheet"/></svg><svg class="pm"><use href="#pmenu"/></svg></div>
    <div class="vbody"><ul class="tree">
     <li class="d0"><svg class="k"><use href="#caret"/></svg><svg class="i14"><use href="#iBook"/></svg>Classeur</li>
     <li class="d1"><svg class="k"><use href="#caret"/></svg><svg class="i14"><use href="#iSheet"/></svg>Sheet 1</li>
     <li class="d2 sel"><svg class="k"><use href="#caret"/></svg><svg class="i14"><use href="#iC"/></svg></li>
     <li class="d3"><svg class="k"><use href="#caret"/></svg><svg class="i14"><use href="#iF"/></svg>Prix</li>
     <li class="d4 leaf"><svg class="i14"><use href="#iT"/></svg>prix &lt; 12</li>
     <li class="d4 leaf"><svg class="i14"><use href="#iT"/></svg>12 &lt;= prix &lt; 14</li>
     <li class="d4 leaf"><svg class="i14"><use href="#iT"/></svg>14 &lt;= prix &lt; 16</li>
     <li class="d4 leaf"><svg class="i14"><use href="#iT"/></svg>16 &lt;= prix &lt; 18</li>
     <li class="d3"><svg class="k"><use href="#caret"/></svg><svg class="i14"><use href="#iF"/></svg>Taille</li>
     <li class="d4 leaf"><svg class="i14"><use href="#iT"/></svg>petite</li>
     <li class="d4 leaf"><svg class="i14"><use href="#iT"/></svg>moyenne</li>
     <li class="d4 leaf"><svg class="i14"><use href="#iT"/></svg>grande</li>
     <li class="d3"><svg class="k"><use href="#caret"/></svg><svg class="i14"><use href="#iF"/></svg>Ingrédients</li>
     <li class="d4"><svg class="k"><use href="#caret"/></svg><svg class="i14"><use href="#iT"/></svg>produit animal</li>
     <li class="d5 leaf"><svg class="i14"><use href="#iT"/></svg>fromage</li>
     <li class="d5 leaf"><svg class="i14"><use href="#iT"/></svg>viande</li>
    </ul><div class="vbar"><i></i></div></div>
   </section>
   <section class="view v2">
    <div class="ptabs"><div class="ptab s1"><svg class="i14" viewBox="0 0 14 14"><use href="#props" width="14" height="14"/></svg><span>Propriétés</span><svg class="i12"><use href="#pclose"/></svg></div>
     <div class="ptab off s2"><svg class="i14" viewBox="0 0 14 14"><rect x=".5" y="1" width="13" height="12" fill="#fff" stroke="#8c7a3f"/><path d="M1 2.500H13" stroke="#4a86c8" stroke-width="2"/><path d="M3 6H5M6 6H8M9 6H11" stroke="#e3662d" stroke-width="2"/><path d="M3 10H5M9 10H11" stroke="#4cae58" stroke-width="2"/></svg><span>Marqueurs</span></div><div class="pctl"><svg class="mn"><use href="#pmin"/></svg><svg class="mx"><use href="#pmax"/></svg></div></div>
    <div class="vtool"><svg class="i14 tb3" viewBox="0 0 14 14"><rect x=".5" y="3.500" width="11" height="9.500" fill="#fff" stroke="#8c7a3f"/><path d="M1 4.500H7" stroke="#4a86c8" stroke-width="2"/><path d="M4 10L8 6" stroke="#555"/><path d="M7 4L10 7L13 2L11 .5Z" fill="#3f9b49" stroke="#236b2c"/></svg><svg class="pm"><use href="#pmenu"/></svg></div>
    <div class="subj">Sujet (Ingrédients)</div>
    <div class="vbody"><div class="props">
     <div class="sec h91"><h2>Structure</h2>
      <div class="row"><svg class="map" viewBox="0 0 18 12"><path d="M5 3L8 5.500M5 9L8 6.500M13 3L10 5.500M13 9L10 6.500" stroke="#5d76ae" fill="none"/><path d="M2.500 .8H5V3H2.500ZM13 .8H15.500V3H13ZM.5 4.800H3V7H.5ZM15 4.800H17.500V7H15ZM2.500 9H5V11.200H2.500ZM13 9H15.500V11.200H13ZM7.500 4.800H10.500V7.200H7.500Z" fill="#dfe7f6" stroke="#5d76ae" stroke-width=".9"/></svg><span>Carte Équilibrée (de Haut ...</span><svg class="ud"><use href="#updn"/></svg></div>
      <div class="row chk"><i></i><span>Suivre la structure du Parent</span></div></div>
     <div class="sec h62"><h2>Styles Sauvegardés</h2><div class="row st"><span>Choisir et appliquer ...</span><svg class="ud"><use href="#updn"/></svg></div></div>
     <div class="sec h99"><h2>Texte</h2>
      <div class="row fo"><span>Noto Sans</span><svg class="ud u2"><use href="#updn"/></svg><span class="ff">ℱ</span></div>
      <div class="row sz"><span class="n13">13</span><svg class="ud u3"><use href="#updn"/></svg><b>B</b><b class="it">I</b><s>ABC</s><i class="blk"></i><svg class="al" viewBox="0 0 14 12"><path d="M0 1H14M0 3.500H10M0 6H14M0 8.500H10M0 11H14" stroke="#222" stroke-width="1.200"/></svg><svg class="kc"><use href="#caret"/></svg></div></div>
     <div class="sec h67"><h2>Forme</h2><div class="row fm"><svg class="el" viewBox="0 0 14 12"><ellipse cx="7" cy="6" rx="6" ry="4.800" fill="#fff" stroke="#8797bf" stroke-width="2"/></svg><span>Ellipse</span><svg class="ud u2"><use href="#updn"/></svg><i class="sw"></i></div></div>
     <div class="sec h60"><h2>Bordure</h2><div class="row fm"><svg class="el" viewBox="0 0 14 12"><path d="M1 6H13" stroke="#5d76ae"/></svg><span>Plus fin</span><svg class="ud u2"><use href="#updn"/></svg><i class="sw no"></i></div></div>
    </div><div class="vbar"><i></i></div></div>
   </section>
  </aside>
 </div>
 <div class="status"><span>Sujet (Ingrédients)</span><span class="auto">Auto Save: OFF</span></div>
</section>

<aside class="dock">
 <div class="run"><svg viewBox="0 0 44 44"><rect x="1" y="1" width="42" height="42" rx="3" fill="url(#gAnchor)"/><g stroke="#eee" stroke-width="2.500" fill="none"><circle cx="22" cy="9" r="3"/><path d="M22 12V36M15 15H29M9 28Q11 36 22 37Q33 36 35 28"/></g><path d="M6 31L9 24L14 30ZM38 31L35 24L30 30Z" fill="#eee"/></svg></div>
 <div><svg viewBox="0 0 44 44"><rect x="1" y="1" width="42" height="42" rx="3" fill="#f6c614"/><path d="M1 4Q1 1 4 1H40Q43 1 43 4V12H22L14 28Z" fill="#d9281f"/><path d="M1 4L15 29L29 25L23 43H4Q1 43 1 40Z" fill="#3aa03c"/><circle cx="22" cy="22" r="11" fill="#e8eef4"/><circle cx="22" cy="22" r="9.500" fill="#2c70a8"/></svg></div>
 <div><svg viewBox="0 0 44 44"><rect x="2" y="2" width="40" height="40" fill="#fff" stroke="#fff" stroke-width="3" stroke-dasharray="4 3"/><rect x="6" y="5" width="32" height="33" fill="#5b8fd0"/><path d="M6 14Q16 2 34 8Q40 18 37 30L30 38H12Q22 38 29 30Q34 20 27 14Z" fill="#183c78"/><path d="M7 24Q9 13 20 14Q29 17 33 27Q26 38 12 35Q6 31 7 24Z" fill="#edd2a0"/><path d="M9 20L20 25L29 19" stroke="#9f7a44" fill="none"/></svg></div>
 <div><svg viewBox="0 0 44 44"><rect x="1" y="1" width="42" height="42" rx="3" fill="#ececec"/><g fill="none" stroke="#cfcfcf"><circle cx="11" cy="34" r="8" stroke-width="2.500"/><circle cx="34" cy="11" r="6" stroke-width="3"/><circle cx="10" cy="12" r="4" stroke-width="3"/></g><g fill="none" stroke="#cfcfcf"><path d="M1.500 27.500A12.500 12.500 0 0 1 22 41" stroke-width="3" stroke-dasharray="2.500 2.500"/><path d="M24.500 8A10 10 0 1 0 42 6" stroke-width="3" stroke-dasharray="3 3"/><circle cx="10" cy="12" r="7" stroke-width="2" stroke-dasharray="2 2"/></g></svg></div>
 <div><svg viewBox="0 0 44 44"><rect x="1" y="1" width="42" height="42" rx="3" fill="url(#gEcl)"/><circle cx="21" cy="22" r="15" fill="#cf7f9c"/><circle cx="24" cy="22" r="15.500" fill="#31265f"/><ellipse cx="25" cy="15" rx="10" ry="7" fill="#8f88bd"/><path d="M1 18H14M1 22H12M1 26H14" stroke="#c9b3dc"/></svg></div>
 <div class="office"><svg viewBox="0 0 44 44"><path d="M1 43V10Q3 1 14 1H43V43Z" fill="#b5dfb8" stroke="#2c8a3c" stroke-width="1.500"/><path d="M4 42L12 28L43 24L38 42Z" fill="#fff"/><path d="M6 8H15L28 31H18Z" fill="#1f6f35"/><path d="M25 8H19L6 33H13Z" fill="#4da42d"/><path d="M24 28L40 31M22 33L39 36M20 38L37 41" stroke="#3b9e52" stroke-width="3"/></svg></div>
 <div class="office"><svg viewBox="0 0 44 44"><path d="M1 43V10Q3 1 14 1H43V43Z" fill="#fbd860" stroke="#e09a12" stroke-width="1.500"/><path d="M4 42L11 29L22 33L27 27L41 36L36 42Z" fill="#fff"/><circle cx="16" cy="18" r="9" fill="none" stroke="#ef9417" stroke-width="6"/><circle cx="38" cy="19" r="6" fill="#fff6d4"/><path d="M36 16L38 20L42 18" stroke="#d88a10" stroke-width="2" fill="none"/></svg></div>
 <div class="office"><svg viewBox="0 0 44 44"><path d="M1 43V10Q3 1 14 1H43V43Z" fill="#f7b896" stroke="#cf4a1a" stroke-width="1.500"/><path d="M4 38L12 23L43 26L37 42Z" fill="#fff"/><path d="M13 34V10H19Q26 11 25 17Q24 22 14 22M8 10H18M8 32H19" fill="none" stroke="#cf4a1a" stroke-width="4.500"/><circle cx="29" cy="29" r="6" fill="#e95c2f"/><path d="M21 38H32" stroke="#e95c2f" stroke-width="2"/></svg></div>
 <div class="office"><svg viewBox="0 0 44 44"><path d="M1 43V10Q3 1 14 1H43V43Z" fill="#9fc2ee" stroke="#1c50a4" stroke-width="1.500"/><path d="M4 42L11 26L43 24L37 42Z" fill="#fff"/><path d="M8 9L14 30L20 13L26 30L32 9" fill="none" stroke="#1250ad" stroke-width="5.500"/><path d="M16 38L30 41M27 34L39 36" stroke="#2c5cb2" stroke-width="2"/></svg></div>
 <div><svg viewBox="0 0 44 44"><rect x="2" y="2" width="40" height="40" fill="#c11212" stroke="#c11212" stroke-width="3" stroke-dasharray="4 3"/><path d="M10 35L17 10H29M13 22H23M22 19H35L17 34H31" stroke="#fff" stroke-width="4" fill="none"/></svg></div>
 <div class="run"><svg viewBox="0 0 24 24"><use href="#chrome"/></svg></div>
 <div class="run two"><svg viewBox="0 0 44 44"><path d="M3 13V8H19V11H42V16H3Z" fill="#fff"/><path d="M1 15H43V42H2Z" fill="url(#gGreen)" stroke="#5d8435"/></svg></div>
 <div class="run"><svg viewBox="0 0 44 44"><rect x="1" y="1" width="42" height="42" rx="3" fill="#ccc"/><rect x="4.500" y="4" width="35" height="35" fill="#1f1c25" stroke="#555"/><path d="M10 9L15 12L10 15M16 17H22" stroke="#fff" stroke-width="2" fill="none"/></svg></div>
 <div class="run office"><svg viewBox="0 0 44 44"><use href="#java"/></svg></div>
 <div class="run hot"><svg viewBox="-1 -1 44 44"><use href="#xm" width="42" height="42"/></svg></div>
</aside>

<footer class="panel">
 <svg class="mint" viewBox="0 0 20 18"><path d="M1 1H14Q19 1 19 6V17H7Q1 17 1 11V6Z" fill="#8ccf52" stroke="#e9f5de" stroke-width="1.500"/><path d="M5 4V10Q5 13.500 8 13.500H12.500Q15.500 13.500 15.500 10V8Q15.500 6.500 13.800 6.500Q12 6.500 12 8V10.500M12 8Q12 6.500 10.300 6.500Q8.500 6.500 8.500 8V10.500" stroke="#fff" stroke-width="1.500" fill="none"/></svg>
 <b class="menu">Menu</b>
 <div class="quick"><svg><use href="#chrome"/></svg><svg><use href="#term"/></svg><svg><use href="#folder"/></svg></div>
 <div class="tasks">
  <div><svg><use href="#chrome"/></svg>Compte rendu pizza ...</div>
  <div><svg><use href="#folder"/></svg>conexp-1.3</div>
  <div><svg><use href="#term"/></svg>Terminal</div>
  <div><svg><use href="#folder"/></svg>treillis</div>
  <div><svg><use href="#java"/></svg>[Concept Explorer]</div>
  <div class="on"><svg><use href="#xm"/></svg>XMind - Classeur&nbsp; 1</div>
 </div>
 <div class="tray">
  <svg viewBox="0 0 14 14"><path d="M7 1Q10 1 10 5Q10 7 8.500 8.500V10L13 11.500V14H1V11.500L5.500 10V8.500Q4 7 4 5Q4 1 7 1Z" fill="#c9c9c9"/></svg>
  <svg viewBox="0 0 14 14"><rect x="2" y="1" width="10" height="12" fill="none" stroke="#bbb" stroke-width="1.500"/><circle cx="7" cy="6" r="3" fill="none" stroke="#bbb" stroke-width="1.500"/><path d="M7 6L10 10" stroke="#bbb" stroke-width="1.500"/></svg>
  <svg viewBox="0 0 14 14"><path d="M4 4L10 10L7 13V1L10 4L4 10" stroke="#8a8a8a" fill="none" stroke-width="1.300"/></svg>
  <svg viewBox="0 0 14 14"><path d="M1 5Q7 0 13 5M3 7.500Q7 4 11 7.500" stroke="#999" fill="none" stroke-width="1.500"/><path d="M5 9.500Q7 8 9 9.500L7 12Z" fill="#ccc"/></svg>
  <svg viewBox="0 0 14 14"><path d="M1 5H3.500L6 2.500V11.500L3.500 9H1Z" fill="#ccc"/><path d="M8 4.500Q9.500 7 8 9.500M10 3Q12 7 10 11M12 2Q14.500 7 12 12" stroke="#ccc" fill="none"/></svg>
  <svg class="big"><use href="#chrome"/></svg>
  <svg class="big" viewBox="0 0 16 16"><path d="M8 0Q11 2 15 2Q15 12 8 16Q1 12 1 2Q5 2 8 0Z" fill="#dcdcdc"/></svg>
  <svg class="big" viewBox="0 0 18 17"><path d="M5 0L9 3L5 6L1 3ZM13 0L17 3L13 6L9 3ZM5 6L9 9L5 12L1 9ZM13 6L17 9L13 12L9 9ZM9 10L13 13L9 16L5 13Z" fill="#f4f4f4"/><circle cx="14" cy="12.500" r="4" fill="#3db54a"/><path d="M12 12.500L13.500 14L16 11" stroke="#fff" fill="none"/></svg>
  <b>15:41</b>
  <svg viewBox="0 0 14 14"><path d="M1.500 2.500H9V9H1.500ZM10.500 5H12.700V12H5V10.500" fill="none" stroke="#bbb" stroke-width="1.500"/></svg>
  <svg class="desk" viewBox="0 0 22 17"><rect x=".5" y=".5" width="21" height="16" fill="#7eaa4e" stroke="#b9d69a"/><path d="M1 1H21V5H1Z" fill="#a7ca80"/><rect x="5" y="12" width="12" height="3" fill="#1d2614"/></svg>
 </div>
</footer>
</main>
</body>
</html>
```
FILE: styles.css
```css
*{box-sizing:border-box}
body{margin:0;font-family:"Noto Sans","Open Sans",sans-serif;font-size:12px;color:#222}
svg{display:block;flex:none}
p,ul,h1,h2{margin:0;padding:0;font-weight:normal}
ul{list-style:none}
.defs{position:absolute}
.desktop{position:relative;width:1920px;height:1980px;overflow:hidden;background:linear-gradient(#dedede 45%,#c9c9c9)}
.offscreen{position:absolute;left:1440px;top:0;width:480px;height:900px;background:#000}
.i8{width:8px;height:8px}.i12{width:12px;height:12px}.i14{width:14px;height:14px}.i15{width:16px;height:16px}.i16{width:16px;height:16px}
.dn6{width:6px;height:4px}.dn8{width:8px;height:5px}

/* browser window */
.chrome{position:absolute;left:0;top:0;width:1440px;height:900px;display:flex;flex-direction:column;background:#fff;overflow:hidden}
.tabstrip{height:25px;flex:none;display:flex;padding-left:9px;background:linear-gradient(#a0b9de,#9cb5db);color:#444}
.tab{position:relative;flex:none;width:178px;height:25px;display:flex;align-items:center;padding:0 0 1px 12px}
.tab>*{position:relative}
.tab .shape{position:absolute;left:-5px;top:0;width:192px;height:26px}
.tab span{margin:0 6px 0 4px;width:125px;white-space:nowrap;-webkit-mask-image:linear-gradient(90deg,#000 82%,transparent);mask-image:linear-gradient(90deg,#000 82%,transparent)}
.tab .full{-webkit-mask-image:none;mask-image:none}
.tab.on{z-index:1;color:#222}
.newtab{width:34px;height:18px;margin:5px 15px 0 4px}
.user{width:46px;height:17px;margin:2px 6px 0 0;border:1px solid #7688a8;border-radius:0 0 3px 3px;background:#8fa3c6;color:#fff;text-align:center;line-height:16px;text-shadow:0 0 1px #222,0 0 1px #222,0 0 2px #222;font-size:12px}
.winbtn{width:24px;height:18px;margin:2px 2px 0 0}
.navbar{height:36px;flex:none;display:flex;align-items:center;padding:0 0 2px 9px;background:linear-gradient(#fbfbfb,#e4e4e4);border-bottom:1px solid #aaa}
.nav{width:17px;height:17px;margin-right:12px}
.omni{width:1153px;flex:none;height:27px;margin:0 10px 0 -2px;display:flex;align-items:center;border:1px solid #a8a8a8;border-radius:2px;background:#fff;padding-left:6px}
.lock{width:12px;height:17px}
.url{flex:1;margin-left:7px;font-size:16px;letter-spacing:.07px;color:#777;white-space:nowrap}
.url i{font-style:normal;color:#1a8f1a}.url b{font-weight:normal;color:#000}
.star{width:18px;height:18px;margin-right:3px}
.ext{width:19px;height:19px;margin-right:13px}
.dochead{height:60px;flex:none;display:flex;font-family:"Liberation Sans",Arial,sans-serif}
.doclogo{width:40px;background:#4285f4;display:flex;justify-content:center;padding-top:22px}
.doclogo svg{width:20px;height:16px}
.docmain{padding:8px 0 0 20px;flex:1}
.titleline{display:flex;align-items:center;height:22px}
h1{font-size:18px;color:#333}
.tstar{width:17px;height:17px;margin:0 10px 0 10px}.tfold{width:18px;height:15px;margin-top:2px}
.docmenu{display:flex;gap:16px;margin-top:7px;font-size:13px;line-height:16px;color:#000;white-space:nowrap}
.docmenu em{font-style:normal;color:#777;margin-left:7px}
.docmenu span:nth-child(8){letter-spacing:.05px}
.docright{width:228px;padding:7px 0 0}
.mail{display:flex;align-items:center;justify-content:flex-end;gap:7px;padding-right:30px;font-size:11px;line-height:14px;color:#666}
.btns{display:flex;gap:9px;margin-top:5px;margin-left:-1px}
.btn{width:94px;height:29px;border:1px solid #d2d2d2;border-radius:2px;background:#f5f5f5;font:bold 11px/27px "Liberation Sans",Arial,sans-serif;color:#333;text-align:center}
.btn.share{width:81px;background:#4a8af4;border-color:#3079ed;color:#fff;display:flex;align-items:center;justify-content:center;gap:8px}
.share svg{width:9px;height:12px}
.doctools{height:36px;flex:none;display:flex;background:linear-gradient(#f8f8f8,#eaeaea);border-top:1px solid #cfcfcf;border-bottom:1px solid #cfcfcf;font:bold 11px "Liberation Sans",Arial,sans-serif;color:#333}
.g{display:flex;align-items:center;border-right:1px solid #cbcbcb;flex:none}
.t{width:18px;height:18px;margin:0 4px}
.t.on{width:26px;height:26px;margin:0;border:1px solid #c2c2c2;border-radius:2px;background:#e2e2e2}
.g1{width:167px;padding-left:57px}
.g2,.g3,.g5{justify-content:space-between;padding:0 10px 0 14px}
.g2{width:71px}.g3{width:109px}.g3 .dn6{margin-right:4px}.g3 b{margin-left:-1px}.g5{width:71px}
.g6{width:124px;padding-left:4px}
.fmt{width:26px;text-align:center;font-size:14px;color:#444}
.fmt.it{font-style:italic;font-family:"Liberation Serif",serif;font-size:16px}
.fmt.un{text-decoration:underline}
.fmt.col{font-weight:normal;color:#000;font-size:15px;height:22px;width:22px;line-height:18px;margin:4px 4px 0 2px;border-bottom:4px solid #000}
.g7{width:61px;padding-left:4px}.g8{width:113px;padding-left:4px}
.g9{width:45px;padding-left:4px}.g9 .dn6{margin-left:3px}
.g10{width:137px;padding-left:2px}.g10 .dn6{margin:0 3px 0 4px}
.g11{width:200px;padding-left:5px;border:0}
.g12{width:157px;padding-left:28px}.g12 b{margin:0 0 0 4px}.g12 .dn6{margin-left:47px}
.g13 svg{width:12px;height:12px;margin:12px}
.ruler{position:relative;height:14px;flex:none;border-bottom:1px solid #d4d4d4;background:linear-gradient(90deg,#ebebeb 399px,#fff 399px,#fff 1023px,#ebebeb 1023px)}
.scale{display:flex;margin-left:305px;width:832px;height:14px;font:10.500px/14px "Liberation Sans",Arial,sans-serif;color:#666;text-align:center;background:linear-gradient(#b5b5b5,#b5b5b5) 0 4px/1px 7px no-repeat,repeating-linear-gradient(90deg,#b5b5b5 0 1px,transparent 1px 37.830px) 0 4px/100% 7px no-repeat,repeating-linear-gradient(90deg,transparent 0 9px,#bbb 9px 10px,transparent 10px 28px,#bbb 28px 29px,transparent 29px 37.830px) 0 6px/100% 3px no-repeat}
.scale span{width:37.830px;flex:none}
.mark{position:absolute;top:1px;width:12px;height:12px}.m1{left:393px}.m2{left:1017px}
.docarea{flex:1;display:flex;background:#ededed;position:relative}
.page{width:817px;margin-left:303px;border:solid #d9d9d9;border-width:0 1px;background:#fff;padding:102px 0 0 144px;font:14.667px/20px "Liberation Sans",Arial,sans-serif;letter-spacing:.13px;color:#000}
.gap{margin-top:20px}.l1{padding-left:48px}.l2{padding-left:96px}
li{position:relative}
.page li::before{content:"-";position:absolute;left:-24px}
.typo{text-decoration:underline wavy #d44 1px;text-underline-offset:2px}
.docscroll{position:absolute;right:0;top:0;bottom:0;width:10px}
.docscroll i{display:block;height:143px;margin-top:459px;background:#bcbcbc;border:1px solid #a5a5a5}
.downloads{height:46px;flex:none;display:flex;padding:3px 0 0 3px;gap:3px;background:#dedede;border-top:1px solid #c4c4c4}
.dl{width:205px;height:39px;display:flex;align-items:center;border:1px solid #a9a9a9;border-bottom:2px solid #8a8a8a;border-radius:3px;background:linear-gradient(#ececec,#e2e2e2);color:#000;font-size:12px}
.dl>svg{width:16px;height:16px;margin:0 12px 3px 9px}.dl span{flex:1;white-space:nowrap;padding-bottom:2px;letter-spacing:-.06px}
.dl>i{height:100%;width:13px;border-left:1px solid #bbb;padding:12px 0 0 3px}
.alldl{flex:1;display:flex;align-items:center;justify-content:flex-end;padding:0 16px 6px 0;color:#000}
.alldl>svg:first-child{width:12px;height:12px;margin-right:7px}.alldl .i8{margin-left:20px}

/* mind-map window */
.xmind{position:absolute;left:62px;top:900px;width:1858px;height:1055px;background:#d6d6d6;display:flex;flex-direction:column;border-bottom:1px solid #888;color:#222}
.wtitle{height:28px;flex:none;display:flex;align-items:center;justify-content:center;position:relative;background:linear-gradient(#e6e6e6,#d6d6d6);font-weight:bold;font-size:13px;letter-spacing:.15px;color:#6d6d6d;text-shadow:0 1px #fff;padding:1px 4px 0 0}
.wctl{position:absolute;right:15px;top:7px;width:60px;height:12px}
.wmenu{height:18px;flex:none;display:flex;align-items:center;gap:11.700px;padding-left:6px}
.wtools{height:37px;flex:none;display:flex;align-items:center;padding:2px 0 0 1px}
.wtools hr{width:3px;height:26px;margin:0 4px 0 5px;border:solid #fff;border-width:0 1px 0 0;border-left:1px solid #8d8d8d}
.wtools .c{width:16px;height:16px;margin:0 5px}
.k{width:10px;height:6px;margin:0 4px}
.bench{flex:none;height:931px;display:flex;padding-left:4px;gap:3px}
.editor{width:1599px;display:flex;flex-direction:column;border:1px solid #929292}
.ptabs{display:flex;height:31px;flex:none;border-bottom:1px solid #929292;position:relative}
.ptab{display:flex;align-items:center;height:31px;border-right:1px solid #929292;border-radius:0 4px 0 0;background:linear-gradient(#fdfdfd,#d6d6d6);white-space:nowrap}
.ptab.off{background:none;height:30px;border-radius:0}
.etab{width:118px;padding-left:3px;background:linear-gradient(#e8efe2,#c2d3b1)}
.etab span{margin:0 8px 0 4px}
.pctl{margin-left:auto;display:flex;padding:7px 6px 0 0}
.mn{width:12px;height:6px;margin-right:6px}.mx{width:12px;height:12px}
.ebody{display:grid;grid-template:848px 14px/1579px 14px;border:solid #c2d3b1;border-width:2px 2px 0}
.canvas{position:relative;overflow:hidden;border-bottom:1px solid #aaa;background:repeating-linear-gradient(#f0f0f2 0 3px,#ececee 4px 6px,#eeeef0 7px 9px)}
.links{position:absolute;left:0;top:0}
.n{position:absolute;margin:-1px 0 0 -.500px;font-size:13px;line-height:18px;color:#111;white-space:nowrap}
.n.big{font-size:18px;line-height:24px;color:#333;margin-left:-1px}
.t1{left:324px;top:130px}.t2{left:475px;top:130px}.t3{left:475px;top:194px}.t4{left:402px;top:158px}
.n.bx{left:255px;height:24px;margin:0;line-height:22px;padding:0 6px 0 5px;min-width:66px;border:1px solid #7f7f7f}
.n.p2,.n.p3,.n.p4{min-width:104px}
.n.p0{left:223px;top:397px;width:46px;min-width:0;height:40px;line-height:37px;background:#fff;padding:0;text-align:center}
.p1{top:458px}.p2{top:485px}.p3{top:512px}.p4{top:539px}
.a1{left:756px;top:334px}.a2{left:725px;top:361px}.a3{left:757px;top:388px}.a4{left:812px;top:361px}.n.a5{left:873px;top:389px}
.b1{left:994px;top:352px}.b2{left:1116px;top:325px}.b3{left:1116px;top:352px}.b4{left:1116px;top:379px}
.c1{left:994px;top:434px}.c2{left:1126px;top:421px}.c3{left:1126px;top:448px}
.vbar{background:linear-gradient(90deg,#dcdcdc,#f3f3f3);border-left:1px solid #aaa;padding:0 2px}
.vbar i{display:block;border:1px solid #8e8e8e;border-radius:5px;background:linear-gradient(90deg,#e3e3e3,#cfcfcf)}
.ebody .vbar i{height:359px;margin-top:161px}
.hbar{background:linear-gradient(#dcdcdc,#f5f5f5);padding:1px 0 0 396px}
.hbar i{display:block;width:787px;height:10px;border:1px solid #8e8e8e;border-radius:5px;background:linear-gradient(#e3e3e3,#cfcfcf)}
.corner{background:#ddd}
.sheets{flex:1;display:flex;align-items:center;border:2px solid #c2d3b1;border-top:0;box-shadow:inset 0 1px #929292;padding-bottom:3px}
.sheet{background:#f7f7f7;width:50px;height:33px;line-height:31px;padding-left:4px;border:solid #929292;border-width:0 1px 1px 0}
.sheets svg{width:14px;height:14px}
.z1{margin-left:1375px}.z2{margin-left:24px}.pct{width:38px;text-align:center;margin:0 7px 0 14px}.z4{margin-left:15px}
.side{width:248px;display:flex;flex-direction:column;gap:3px}
.view{border:1px solid #929292;border-radius:3px 3px 0 0;display:flex;flex-direction:column;position:relative}
.v1{height:464px}.v2{height:464px}
.v1 .s1{width:100px}.v1 .s2{width:104px}.v2 .s1{width:106px}.v2 .s2{width:91px}
.s1{padding-left:4px}.s1 span{margin:0 7px 0 5px}.s2{padding-left:4px}.s2 span{margin-left:4px}
.vtool{display:flex;align-items:center;justify-content:flex-end;height:34px;border-bottom:1px solid #929292;margin:0 2px;padding-right:5px}
.pressed{width:24px;height:26px;border:1px solid #777;border-radius:3px;background:#b7b7b7;padding:5px 4px}
.tb2{margin:0 14px 0 8px}.tb3{margin:5px 14px 0 0}.pm{width:12px;height:6px;margin-bottom:8px}
.vbody{flex:1;display:flex;margin:0 2px;overflow:hidden}
.v1 .vbody{flex:none;height:395px}
.vbody>.vbar{width:14px;padding:1px 1px}
.v1 .vbar i{height:259px}.v2 .vbar i{height:269px}
.tree{width:229px;background:#f7f7f7;overflow:hidden}
.tree li{height:25px;display:flex;align-items:center;white-space:nowrap}
.tree .k{margin:0 7px 0 1px}.tree .i14{margin-right:5px}
.d1{padding-left:15px}.d2{padding-left:30px}.d3{padding-left:45px}.d4{padding-left:60px}.d5{padding-left:75px}
.tree .leaf .i14{margin-left:18px}
.tree li{left:-.500px}
.tree .sel{left:0;background:linear-gradient(#97b67b,#85a568);border:solid #8a8a8a;border-width:1px 0}
.v2 .vtool{height:33px}
.subj{height:19px;margin:0 2px;border-bottom:1px solid #c2c2c2;line-height:20px}
.v2 .vbody{flex:none;height:377px}
.props{width:229px;background:#f7f7f7;padding:5px 5px 0}
.sec h2{height:23px;font-size:12px;line-height:23px;font-weight:bold;color:#5b6b4b;padding-left:5px;border-top:1px solid #c5d4b4;border-radius:4px 4px 0 0;background:linear-gradient(#e4eadf,#f7f7f7)}
.h91{height:92px}.h62{height:62px}.h99{height:99px}.h67{height:67px}.h60{height:60px}
.row{display:flex;align-items:center;height:30px;white-space:nowrap;padding-left:12px}
.h91 .row{margin-top:4px}.h91 .row.chk{margin-top:0}
.row .ud{width:8px;height:11px;margin-left:auto;margin-right:12px}
.map{width:20px;height:14px;margin:0 5px 0 3px}
.chk i{width:14px;height:14px;border:1px solid #999;border-radius:2px;background:#fcfcfc;margin:0 6px 0 -1px}
.st{margin-top:3px}.fo{margin-top:5px}.sz{margin-top:4px}.fm{margin-top:6px}
.row .u2{margin-right:13px}
.ff{width:16px;margin-right:14px;font:bold 18px/18px "DejaVu Sans",serif;color:#111}
.n13{width:31px}.row .u3{margin:0 15px 0 0}
.sz b{width:14px;margin-right:11px;font:bold 12px "DejaVu Serif","Liberation Serif",serif;color:#000;text-align:center}.sz .it{font-style:italic}
.sz s{width:17px;font:8px "Liberation Sans",sans-serif;color:#000;margin-right:9px}
.blk{width:16px;height:16px;background:#333;border:1px solid #555;margin-right:11px}
.al{width:14px;height:12px}.kc{width:8px;height:5px;margin-left:11px}
.el{width:14px;height:12px;margin:0 5px 0 1px}
.sw{width:16px;height:16px;border:1px solid #555;background:#fff;margin-right:14px}
.sw.no{background:linear-gradient(135deg,#fff 47%,#e33 47% 53%,#fff 53%)}
.status{flex:1;display:flex;align-items:flex-start;justify-content:space-between;padding:6px 0 0 5px;font-size:12px}
.auto{height:31px;margin-right:249px;padding-right:7px;border-right:1px solid #999;font-size:11px}

/* dock */
.dock{position:absolute;left:-4px;top:1054px;width:66px;height:772px;padding:6px 0 0 4px;border:1px solid #666;border-radius:0 5px 5px 0;background:linear-gradient(90deg,#2b2b2b 50%,#4a4a4a)}
.dock div{height:51px;padding:0 0 0 6px;position:relative}
.dock div svg{width:44px;height:44px;margin-left:2px}
.dock .office svg{width:46px;height:46px;margin:-2px 0 0 1px}
.dock .office{padding-top:.1px}
.run::before{content:"";position:absolute;left:-1px;top:21px;width:4px;height:3px;background:#c8f0a0;box-shadow:0 0 6px 3px #5f7d45}
.two::before{height:8px;background:linear-gradient(#c8f0a0 3px,transparent 3px 5px,#c8f0a0 5px)}
.dock .hot{background:#8b1a14;top:-3px;padding-top:3px;width:60px;background:linear-gradient(90deg,#8b1a14 60%,#4a3a3a)}

/* bottom panel */
.panel{position:absolute;left:0;top:1955px;width:1920px;height:25px;display:flex;align-items:center;padding-left:4px;background:#535353;color:#e8e8e8}
.mint{width:20px;height:18px}
.menu{width:54px;margin-left:7px;font-size:12px;color:#dcdcdc;letter-spacing:.3px;margin-top:-1px}
.quick{display:flex;gap:4px;width:94px}.quick svg{width:18px;height:18px}
.tasks{display:flex;gap:3px;align-self:flex-end}
.tasks div{width:160px;height:24px;display:flex;align-items:center;gap:3px;padding:0 0 1px 8px;border:1px solid #7d7d7d;border-radius:2px;background:linear-gradient(#5c5c5c,#6c6c6c);white-space:nowrap}
.tasks svg{width:15px;height:16px}
.tasks .on{background:linear-gradient(#969696,#707070)}
.tray{margin-left:auto;display:flex;align-items:center;gap:6px;padding-right:3px}
.tray svg{width:14px;height:14px}.tray .big{width:16px;height:16px}
.tray b{font:bold 11px "DejaVu Sans",sans-serif;width:38px;color:#dcdcdc}
.tray .desk{width:22px;height:17px}
```
